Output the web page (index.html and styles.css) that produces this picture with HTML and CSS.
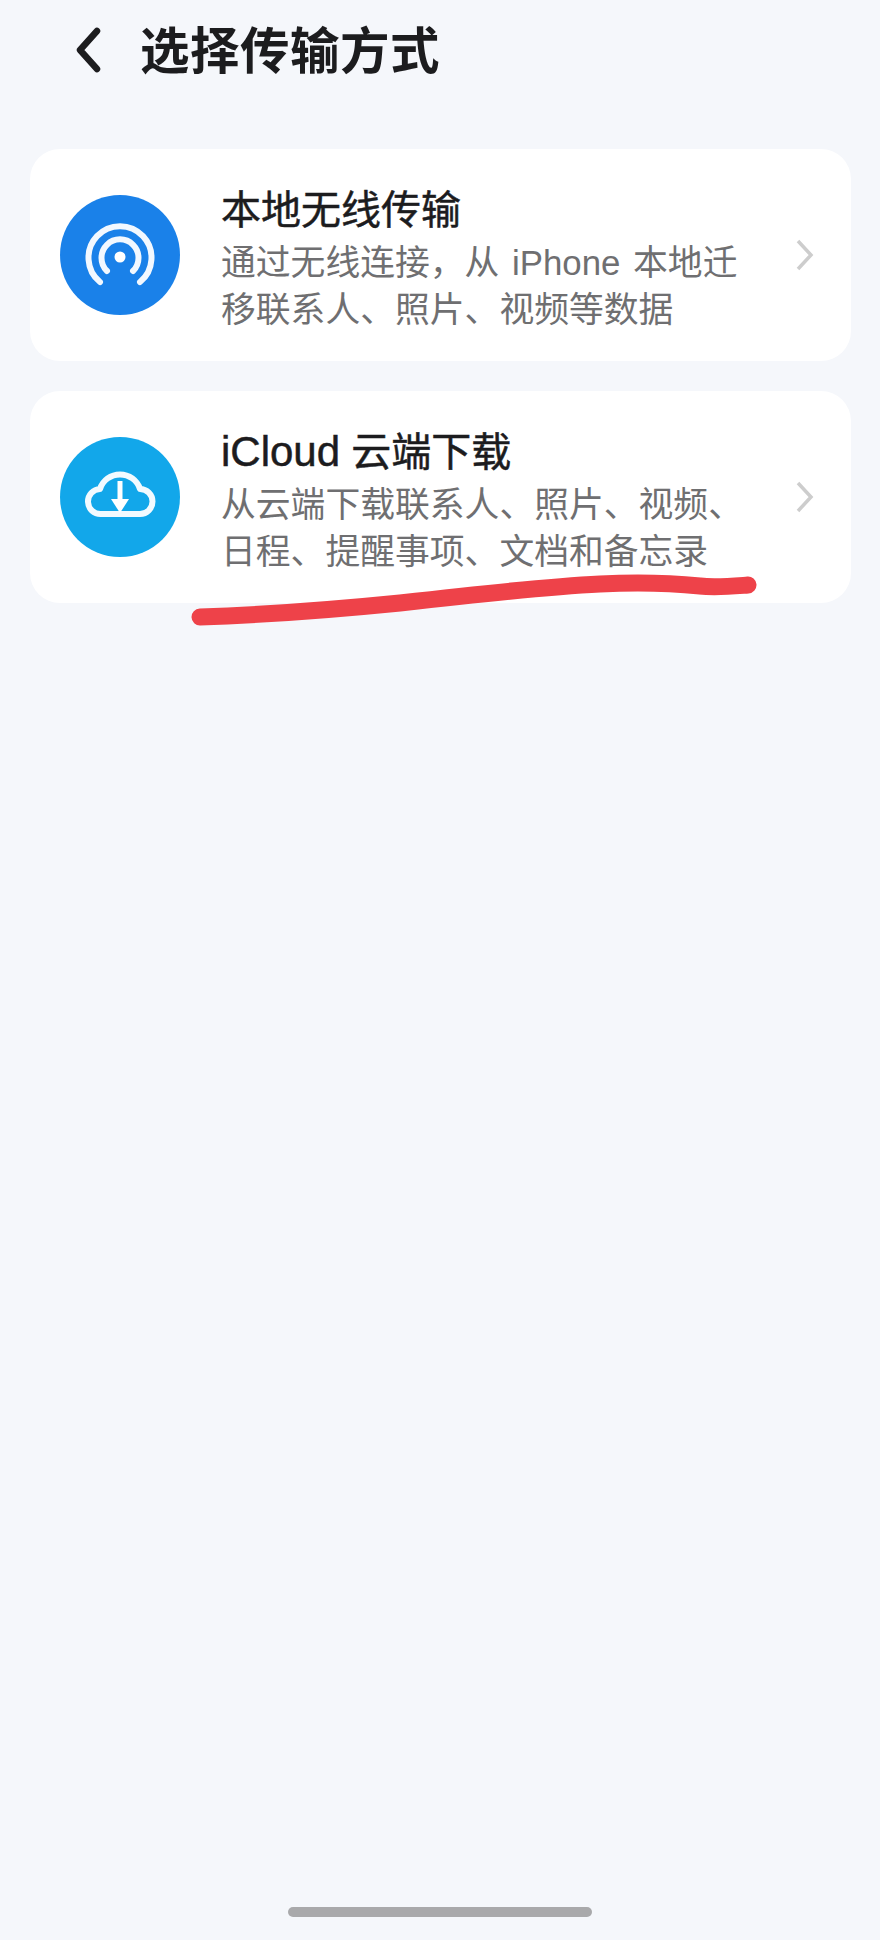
FILE: index.html
```html
<!DOCTYPE html>
<html lang="zh-CN">

<head>
    <meta charset="UTF-8">
    <title>选择传输方式</title>
    <link rel="stylesheet" href="styles.css">
</head>

<body>

    <div class="screen">

        <!-- Header -->
        <div class="header">
            <svg class="back" width="30" height="46" viewBox="0 0 30 46">
                <path d="M24 4 L7 23 L24 42" fill="none" stroke="#1c1c1e" stroke-width="6.500" stroke-linecap="round" stroke-linejoin="round"/>
            </svg>
            <h1>选择传输方式</h1>
        </div>

        <!-- Transfer options -->
        <div class="list">
            <div class="card">
                <div class="icon blue">
                    <svg width="120" height="120" viewBox="0 0 120 120">
                        <circle cx="60" cy="62" r="5.500" fill="#fff"/>
                        <path d="M47 76 A18.500 18.500 0 1 1 73 76" fill="none" stroke="#f2f8ff" stroke-width="6" stroke-linecap="round"/>
                        <path d="M40 87 A31.500 31.500 0 1 1 80 87" fill="none" stroke="#f2f8ff" stroke-width="6" stroke-linecap="round"/>
                    </svg>
                </div>
                <div class="text">
                    <div class="name">本地无线传输</div>
                    <div class="desc">通过无线连接，从 iPhone 本地迁移联系人、照片、视频等数据</div>
                </div>
                <svg class="arrow" width="20" height="32" viewBox="0 0 20 32">
                    <path d="M3 2 L16 16 L3 30" fill="none" stroke="#cdcdcd" stroke-width="3.500"/>
                </svg>
            </div>

            <div class="card">
                <div class="icon sky">
                    <svg width="120" height="120" viewBox="0 0 120 120">
                        <path d="M41 77 A12.500 12.500 0 0 1 40 52 A21 21 0 0 1 80 52 A12.500 12.500 0 0 1 80 77 Z" fill="none" stroke="#f2faff" stroke-width="6" stroke-linejoin="round"/>
                        <path d="M60 44 V66" fill="none" stroke="#fff" stroke-width="5"/>
                        <path d="M51 62 H69 L60 76 Z" fill="#fff"/>
                    </svg>
                </div>
                <div class="text">
                    <div class="name"><span class="latin">iCloud</span> 云端下载</div>
                    <div class="desc">从云端下载联系人、照片、视频、日程、提醒事项、文档和备忘录</div>
                </div>
                <svg class="arrow" width="20" height="32" viewBox="0 0 20 32">
                    <path d="M3 2 L16 16 L3 30" fill="none" stroke="#cdcdcd" stroke-width="3.500"/>
                </svg>
            </div>
        </div>

        <!-- Red pen mark drawn over the second card -->
        <svg class="scribble" width="880" height="60" viewBox="0 0 880 60">
            <path d="M200 44 C260 42 340 36 400 30 C470 22 540 14 600 11 C640 9 680 11 700 13 C715 15 735 13 748 12" fill="none" stroke="#ee4249" stroke-width="17" stroke-linecap="round"/>
        </svg>

        <div class="home-bar"></div>
    </div>

</body>

</html>
```

FILE: styles.css
```css
* {
    box-sizing: border-box;
}

body {
    margin: 0;
    background: #f5f7fb;
    font-family: "Liberation Sans", "Noto Sans CJK SC", sans-serif;
}

.screen {
    position: relative;
    height: 1940px;
    display: flex;
    flex-direction: column;
    overflow: hidden;
}

.header {
    display: flex;
    align-items: center;
    height: 95px;
    padding-left: 73px;
    gap: 37px;
}

.back {
    margin-top: 5px;
}

.header h1 {
    margin: 0;
    font-size: 49.500px;
    font-weight: 700;
    color: #1c1c1e;
    letter-spacing: 0.500px;
}

.list {
    display: flex;
    flex-direction: column;
    gap: 30px;
    margin: 54px 29px 0 30px;
}

.card {
    display: flex;
    align-items: center;
    height: 212px;
    padding: 0 36px 0 30px;
    background: #fff;
    border-radius: 30px;
}

.icon {
    flex: none;
    width: 120px;
    height: 120px;
    border-radius: 50%;
    margin-top: -1px;
}

.icon svg {
    display: block;
}

.blue {
    background: #1a81e9;
}

.sky {
    background: #12a7ea;
}

.text {
    width: 540px;
    margin: 8px 0 0 41px;
}

.name {
    font-size: 40px;
    line-height: 52px;
    color: #1c1c1e;
    -webkit-text-stroke: 0.500px #1c1c1e;
}

.latin {
    font-size: 42px;
}

.desc {
    margin-top: 2.500px;
    font-size: 34.800px;
    line-height: 47.500px;
    word-spacing: 3px;
    color: #6f6f71;
}

.arrow {
    flex: none;
    margin-left: auto;
    margin-top: -1px;
}

.scribble {
    position: absolute;
    left: 0;
    top: 573px;
}

.home-bar {
    position: absolute;
    left: 288px;
    top: 1907px;
    width: 304px;
    height: 10px;
    border-radius: 5px;
    background: #a9a9ab;
}
```
